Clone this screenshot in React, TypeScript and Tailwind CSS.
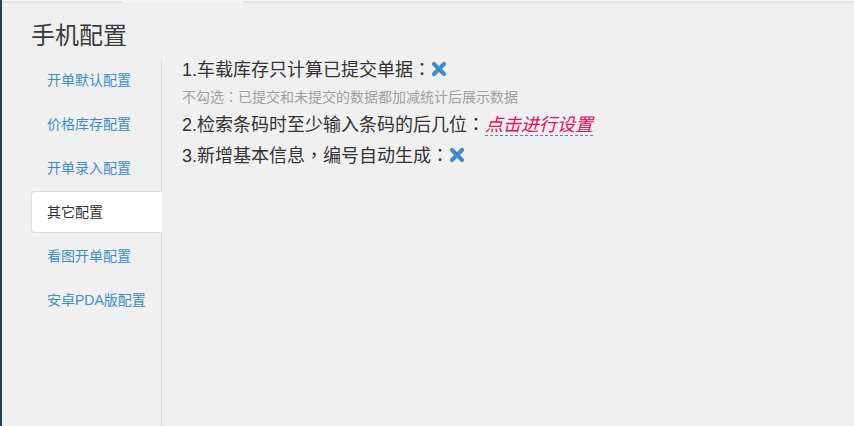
import React from 'react';

const NAV = ['开单默认配置', '价格库存配置', '开单录入配置', '其它配置', '看图开单配置', '安卓PDA版配置'];
const ACTIVE = 3;

// centred full-width punctuation, as in the reference
const P: React.FC<{ children: React.ReactNode }> = ({ children }) => (
  <span className="leading-none" style={{ fontFamily: '"Noto Sans CJK TC", sans-serif' }}>{children}</span>
);

const XIcon: React.FC = () => (
  <svg width="16" height="16" viewBox="0 0 16 16" className="inline-block -mt-[4px]">
    <path d="M3 3 L13 13 M13 3 L3 13" stroke="#428bca" strokeWidth="4.2" strokeLinecap="round" />
  </svg>
);

const App: React.FC = () => {
  return (
    <div
      className="w-[854px] h-[426px] bg-[#f0f0f0] border-l-2 border-[#2a3f54] flex flex-col overflow-hidden text-[#333]"
      style={{ fontFamily: '"Liberation Sans", "Noto Sans CJK SC", sans-serif' }}
    >
      <div className="h-[3px] flex border-t border-[#f5f5f5]">
        <div className="w-[120px] bg-[#e2e2e2]"></div>
        <div className="w-[121px] bg-[#f4f4f4]"></div>
        <div className="flex-1 bg-[#e2e2e2]"></div>
      </div>

      <h3 className="pl-[29px] pt-[20px] text-[24px] leading-[26px] font-normal mb-[10px] text-[#3a3a3a]">手机配置</h3>

      <div className="flex flex-1 pl-[29px]">
        <ul className="w-[131px] border-r border-[#dddddd] shrink-0">
          {NAV.map((item, i) => (
            <li
              key={item}
              className={
                i === ACTIVE
                  ? 'h-[42px] mb-[2px] flex items-center pl-[15px] text-[14px] bg-white border border-[#dddddd] border-r-0 rounded-l-[4px] -mr-px text-[#333]'
                  : 'h-[42px] mb-[2px] flex items-center pl-[16px] text-[14px] text-[#428bca]'
              }
            >
              {item}
            </li>
          ))}
        </ul>

        <div className="pl-[20px]">
          <div className="text-[18px] leading-[22px] h-[22px]">
            1.车载库存只计算已提交单据<P>：</P><XIcon />
          </div>
          <div className="text-[14px] leading-[20px] h-[20px] text-[#a0a0a0] mt-[6px]">
            不勾选<P>：</P>已提交和未提交的数据都加减统计后展示数据
          </div>
          <div className="text-[18px] leading-[22px] h-[22px] mt-[7px]">
            2.检索条码时至少输入条码的后几位<P>：</P>
            <span className="italic text-[#e2125a] border-b border-dashed border-[#428bca]">点击进行设置</span>
          </div>
          <div className="text-[18px] leading-[22px] h-[22px] mt-[9px]">
            3.新增基本信息<P>，</P>编号自动生成<P>：</P><XIcon />
          </div>
        </div>
      </div>
    </div>
  );
};

export default App;
